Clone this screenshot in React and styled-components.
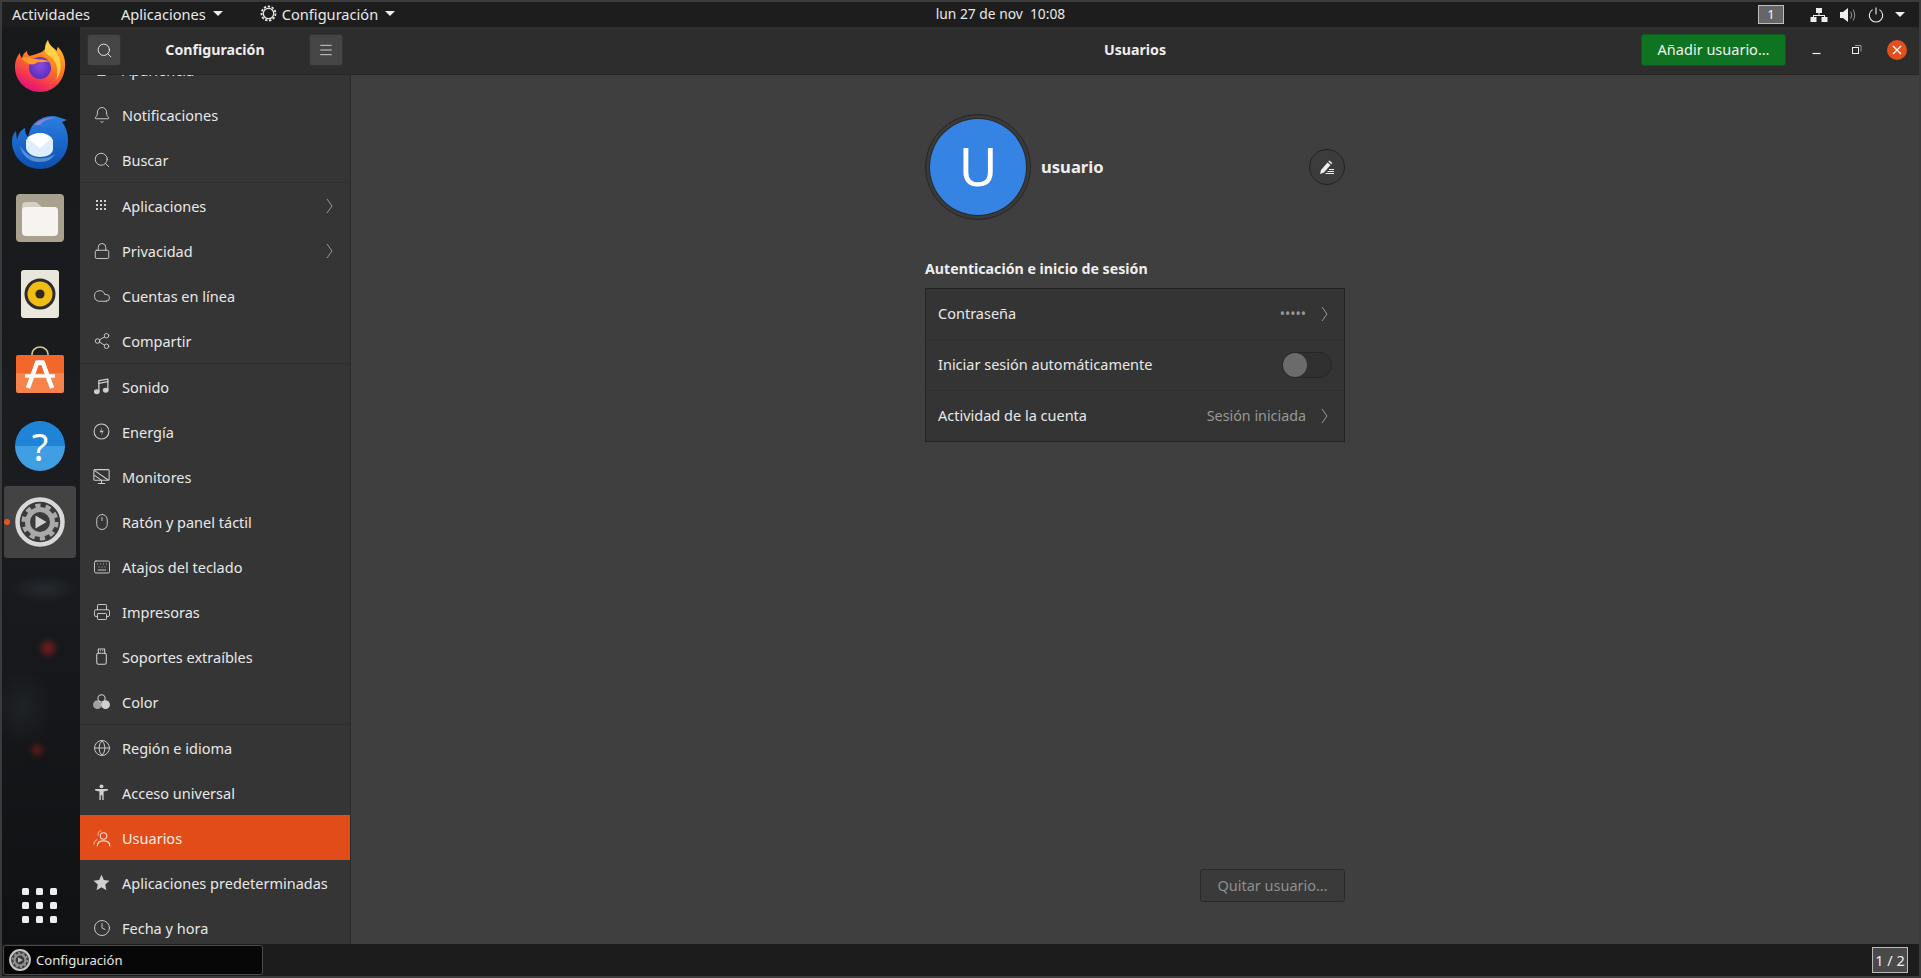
import React from 'react';
import styled, { createGlobalStyle } from 'styled-components';
import { Bell, Search, Lock, Cloud, Share2, Mouse, Keyboard, Printer, Globe, Clock, Menu } from 'lucide-react';

const GlobalStyle = createGlobalStyle`
  html, body {
    margin: 0;
    height: 100%;
    overflow: hidden;
    background: #3b3b3b;
    font-family: "Noto Sans", "Open Sans", sans-serif;
  }
  * { box-sizing: border-box; }
`;

const Glyph = ({ children, size = 17, vb = 16 }) => (
  <svg width={size} height={size} viewBox={`0 0 ${vb} ${vb}`} fill="none" stroke="currentColor" strokeWidth="1" strokeLinecap="round" strokeLinejoin="round">
    {children}
  </svg>
);

const lucide = (Comp) => () => <Comp size={18} strokeWidth={1.25} />;

const GripIcon = () => (
  <svg width="17" height="17" viewBox="0 0 17 17" fill="currentColor">
    {[3, 7, 11].flatMap((y) => [3, 7, 11].map((x) => <rect key={`${x}-${y}`} x={x} y={y} width="2" height="2" />))}
  </svg>
);
const MusicIcon = () => (
  <Glyph>
    <path d="M5.500 12.800V2.500L14 1v10" strokeWidth="1.200" />
    <path d="M5.500 5 14 3.500" strokeWidth="1.200" />
    <ellipse cx="3.600" cy="13" rx="2.200" ry="1.800" fill="currentColor" />
    <ellipse cx="12" cy="11.500" rx="2.200" ry="1.800" fill="currentColor" />
  </Glyph>
);
const EnergyIcon = () => (
  <Glyph>
    <circle cx="8" cy="8" r="7" />
    <path d="M8.800 3.500 6.300 8.600h2.400L7.400 12.500l2.600-5.300H7.700z" fill="currentColor" stroke="none" />
  </Glyph>
);
const MonitorIcon = () => (
  <Glyph>
    <rect x="0.800" y="1.500" width="14.400" height="10" rx="1" />
    <path d="M1.500 2.500 14 11M1.500 7l6 4.200M5 14.500h6M8 11.500v3" />
  </Glyph>
);
const UsbIcon = () => (
  <Glyph>
    <rect x="3.500" y="5" width="9" height="10.300" rx="1.600" />
    <path d="M5 5V1h6v4M7 2.600h.1M9 2.600h.1" />
  </Glyph>
);
const ColorIcon = () => (
  <Glyph>
    <circle cx="8" cy="5" r="3.400" />
    <circle cx="4.200" cy="11" r="3.600" fill="currentColor" opacity=".7" />
    <circle cx="11.800" cy="11" r="3.600" fill="currentColor" />
  </Glyph>
);
const AccessIcon = () => (
  <svg width="17" height="17" viewBox="0 0 16 16" fill="currentColor">
    <circle cx="8" cy="2.200" r="1.800" />
    <path d="M2 4.800h12v1.400l-4 .8V15H8.700v-4.500H7.300V15H6V7L2 6.200z" />
  </svg>
);
const UsersIcon = () => (
  <Glyph size={18}>
    <circle cx="9.400" cy="6.200" r="2.900" stroke="#f5d9cf" />
    <path d="M3.800 15c.2-3 2.600-4.400 5.600-4.400s5.400 1.400 5.600 4.400" stroke="#f5d9cf" />
    <path d="M7.200 1.600a3 3 0 0 0-2.600 4M3.600 9.500C2 10.200 1 11.400.8 13.400" stroke="#f0a689" />
  </Glyph>
);
const StarIcon = () => (
  <svg width="17" height="17" viewBox="0 0 16 16" fill="currentColor">
    <path d="M8 .8l2.200 4.900 5.300.6-4 3.600 1.100 5.300L8 12.500l-4.600 2.700 1.100-5.300-4-3.600 5.300-.6z" />
  </svg>
);
const AppearanceIcon = () => (
  <Glyph>
    <rect x="0.800" y="1" width="14.400" height="9" rx="1" fill="currentColor" />
    <path d="M8 10v3M4.500 13.500h7" />
  </Glyph>
);

const Chevron = styled.svg.attrs({ viewBox: '0 0 7 16', children: <path d="M1 1l5 7-5 7" fill="none" stroke="currentColor" strokeWidth="1" /> })`
  width: 7px;
  height: 16px;
  color: #9a9a9a;
  flex: none;
`;

const PanelGear = () => (
  <svg width="17" height="17" viewBox="0 0 17 17" fill="none" stroke="#e6e6e6">
    <circle cx="8.500" cy="8.500" r="5.200" strokeWidth="1.300" />
    <circle cx="8.500" cy="8.500" r="7" strokeWidth="1.800" strokeDasharray="2.400 1.600" />
  </svg>
);

const GearIcon = ({ size = 50, ring = '#d8d8d8', gear = '#a9a9a9', play = '#cfcfcf' }) => (
  <svg width={size} height={size} viewBox="0 0 50 50">
    <circle cx="25" cy="25" r="22.500" fill="#3a3a3a" stroke={ring} strokeWidth="4.500" />
    <circle cx="25" cy="25" r="12.500" fill="none" stroke={gear} strokeWidth="5" />
    <circle cx="25" cy="25" r="16.500" fill="none" stroke={gear} strokeWidth="4" strokeDasharray="5.200 5.170" />
    <path d="M20.500 18.500 31.500 25l-11 6.500z" fill={play} />
  </svg>
);

const FirefoxLogo = () => (
  <svg width="52" height="54" viewBox="0 0 52 54">
    <defs>
      <linearGradient id="ffBody" x1="0.800" y1="0" x2="0.300" y2="1">
        <stop offset="0" stopColor="#ffc02e" />
        <stop offset="0.450" stopColor="#ff7a1f" />
        <stop offset="0.850" stopColor="#f0255f" />
        <stop offset="1" stopColor="#d8127f" />
      </linearGradient>
      <radialGradient id="ffCore" cx="0.500" cy="0.400" r="0.600">
        <stop offset="0" stopColor="#8a4be0" />
        <stop offset="1" stopColor="#5b2bb8" />
      </radialGradient>
    </defs>
    <path d="M34 1c0 5 5 7 9 11 0-2 0-3 1-4 4 4 8 11 7 20-1 14-11 25-25 25C12 53 1 42 1 28c0-6 2-11 5-14 0 3 1 4 2 5 1-4 3-6 5-7 0 3 1 4 3 5 5-2 13-3 15-7 1-3 2-6 3-9z" fill="url(#ffBody)" />
    <path d="M34 1c1 6 8 10 11 17 3 8 2 17-3 23 3-8 1-18-5-23-4-3-7-4-6-9 0-3 1-6 3-8z" fill="#ffd74a" opacity=".9" />
    <circle cx="26" cy="29" r="11" fill="url(#ffCore)" />
    <path d="M8 19c5-2 9 0 13 1 6 1 11 0 15 3-5-1-8 1-12 0-3 3-8 3-11 1-2-1-4-3-5-5z" fill="#ff9a2a" />
  </svg>
);

const ThunderbirdLogo = () => (
  <svg width="56" height="54" viewBox="0 0 56 54">
    <defs>
      <linearGradient id="tbBody" x1="0.500" y1="0" x2="0.500" y2="1">
        <stop offset="0" stopColor="#2a7fe0" />
        <stop offset="1" stopColor="#0c4fb0" />
      </linearGradient>
    </defs>
    <path d="M20 11C26 3 38-1 46 2l9 3-5 2c4 5 6 12 6 19 0 15-12 28-28 28C13 54 0 42 0 27c0-6 2-9 4-11l1 9c1-6 4-10 8-12 0 4 1 7 3 9 1-4 2-8 4-11z" fill="url(#tbBody)" />
    <path d="M22 10C28 4 37 1 45 3c-7 0-13 2-17 7z" fill="#8d7fd8" />
    <path d="M14 25c3-3 9-7 14-7s10 3 13 7v9c0 5-6 8-13 8s-14-4-14-10z" fill="#dfeefb" />
    <path d="M15 23c3-3 8-5 13-5s9 2 12 5L28 33z" fill="#fff" />
    <path d="M8 31c2 10 10 16 19 16s13-3 16-8c-6 4-12 5-18 4-7-1-12-5-17-12z" fill="#8bbdf0" opacity=".55" />
  </svg>
);

const FilesLogo = () => (
  <svg width="50" height="50" viewBox="0 0 50 50">
    <rect x="1" y="1" width="48" height="48" rx="4" fill="#a9a18f" />
    <path d="M7 13a4 4 0 0 1 4-4h10l6 5h12a4 4 0 0 1 4 4v6H7z" fill="#d4cfc4" />
    <rect x="7" y="14" width="36" height="29" rx="4" fill="#f6f4f1" />
  </svg>
);

const RhythmboxLogo = () => (
  <svg width="40" height="50" viewBox="0 0 40 50">
    <rect x="1" y="1" width="38" height="48" rx="3" fill="#e9e6db" />
    <circle cx="20" cy="25" r="15.500" fill="#2c2c2c" />
    <circle cx="20" cy="25" r="12.500" fill="#efbd13" />
    <circle cx="20" cy="25" r="4.600" fill="#2e2a20" />
  </svg>
);

const StoreLogo = () => (
  <svg width="50" height="48" viewBox="0 0 50 48">
    <path d="M17 11V8a8 7 0 0 1 16 0v3" fill="none" stroke="#d9c79a" strokeWidth="1.600" />
    <path d="M3 9h44a2 2 0 0 1 2 2v16H1V11a2 2 0 0 1 2-2z" fill="#f4672a" />
    <path d="M1 27h48v18a2 2 0 0 1-2 2H3a2 2 0 0 1-2-2z" fill="#f7824a" />
    <path d="M13 42 22 17h6l9 25" fill="none" stroke="#fff" strokeWidth="4.500" />
    <path d="M21 16h8M10 30h30" fill="none" stroke="#fff" strokeWidth="3.500" />
  </svg>
);

const groups = [
  [
    { label: 'Apariencia', Icon: AppearanceIcon },
    { label: 'Notificaciones', Icon: lucide(Bell) },
    { label: 'Buscar', Icon: lucide(Search) },
  ],
  [
    { label: 'Aplicaciones', Icon: GripIcon, more: true },
    { label: 'Privacidad', Icon: lucide(Lock), more: true },
    { label: 'Cuentas en línea', Icon: lucide(Cloud) },
    { label: 'Compartir', Icon: lucide(Share2) },
  ],
  [
    { label: 'Sonido', Icon: MusicIcon },
    { label: 'Energía', Icon: EnergyIcon },
    { label: 'Monitores', Icon: MonitorIcon },
    { label: 'Ratón y panel táctil', Icon: lucide(Mouse) },
    { label: 'Atajos del teclado', Icon: lucide(Keyboard) },
    { label: 'Impresoras', Icon: lucide(Printer) },
    { label: 'Soportes extraíbles', Icon: UsbIcon },
    { label: 'Color', Icon: ColorIcon },
  ],
  [
    { label: 'Región e idioma', Icon: lucide(Globe) },
    { label: 'Acceso universal', Icon: AccessIcon },
    { label: 'Usuarios', Icon: UsersIcon, active: true },
    { label: 'Aplicaciones predeterminadas', Icon: StarIcon },
    { label: 'Fecha y hora', Icon: lucide(Clock) },
  ],
];

export default function App() {
  return (
    <>
      <GlobalStyle />
      <Screen>
        <TopBar>
          <TopLeft>
            <TopItem>Actividades</TopItem>
            <TopItem>Aplicaciones<Caret /></TopItem>
            <TopItem $wide><PanelGear />Configuración<Caret /></TopItem>
          </TopLeft>
          <PanelClock>lun 27 de nov&nbsp;&nbsp;10:08</PanelClock>
          <TopRight>
            <WorkspaceBox>1</WorkspaceBox>
            <svg width="18" height="16" viewBox="0 0 18 16" fill="#eee">
              <rect x="6" y="1" width="6" height="5" />
              <rect x="0.500" y="10" width="6" height="5" />
              <rect x="11.500" y="10" width="6" height="5" />
              <path d="M8.500 6h1v2H15v2h-1V9H4v1H3V8h5.500z" />
            </svg>
            <svg width="18" height="16" viewBox="0 0 18 16" fill="#eee">
              <path d="M1 5h3l5-4v14l-5-4H1z" />
              <path d="M11.500 4.500c1.300 2 1.300 5 0 7M14 2.500c2.200 3 2.200 8 0 11" fill="none" stroke="#8a8a8a" strokeWidth="1.100" />
            </svg>
            <svg width="16" height="16" viewBox="0 0 16 16" fill="none" stroke="#eee" strokeWidth="1.100">
              <path d="M4.600 2.600a6.700 6.700 0 1 0 6.800 0M8 .5v7" />
            </svg>
            <EndCaret />
          </TopRight>
        </TopBar>

        <Middle>
          <Dock>
            <Glow $x={46} $y={621} $r={7} />
            <Glow $x={35} $y={723} $r={5} />
            <DockItem><FirefoxLogo /></DockItem>
            <DockItem><ThunderbirdLogo /></DockItem>
            <DockItem><FilesLogo /></DockItem>
            <DockItem><RhythmboxLogo /></DockItem>
            <DockItem><StoreLogo /></DockItem>
            <DockItem><HelpBall>?</HelpBall></DockItem>
            <DockItem $active><RunDot /><GearIcon /></DockItem>
            <AppGrid>{Array.from({ length: 9 }, (_, i) => <i key={i} />)}</AppGrid>
          </Dock>

          <SidePane>
            <SideHead>
              <HeadButton><Search size={17} strokeWidth={1.3} /></HeadButton>
              <HeadTitle>Configuración</HeadTitle>
              <HeadButton><Menu size={16} strokeWidth={1.2} /></HeadButton>
            </SideHead>
            <SideList>
              {groups.map((group, g) => (
                <SideGroup key={g}>
                  {group.map(({ label, Icon, more, active }) => (
                    <SideRow key={label} $active={active}>
                      <SideIcon><Icon /></SideIcon>
                      <span>{label}</span>
                      {more && <Chevron />}
                    </SideRow>
                  ))}
                </SideGroup>
              ))}
            </SideList>
          </SidePane>

          <MainPane>
            <MainHead>
              <MainTitle>Usuarios</MainTitle>
              <AddButton>Añadir usuario…</AddButton>
              <WinButtons>
                <WinButton>
                  <svg width="12" height="12" viewBox="0 0 12 12"><path d="M1.500 9.500h8" stroke="#eee" strokeWidth="1.200" /></svg>
                </WinButton>
                <WinButton>
                  <svg width="12" height="12" viewBox="0 0 12 12" fill="none" stroke="#eee">
                    <rect x="1.500" y="3.500" width="6" height="6" />
                    <path d="M4 1.500h6v6" stroke="#999" />
                  </svg>
                </WinButton>
                <CloseButton>
                  <svg width="10" height="10" viewBox="0 0 10 10"><path d="M1 1l8 8M9 1l-8 8" stroke="#fff" strokeWidth="1.300" /></svg>
                </CloseButton>
              </WinButtons>
            </MainHead>

            <Content>
              <Column>
                <Profile>
                  <AvatarRing><Avatar>U</Avatar></AvatarRing>
                  <UserName>usuario</UserName>
                  <EditButton>
                    <svg width="16" height="16" viewBox="0 0 16 16" fill="#eee">
                      <path d="M1 15l1-4 6.500-7.500 3 2.600L5 13.500z" />
                      <path d="M9.300 2.600l1-1.100 3 2.600-1 1.100zM10 10h5v1h-5zM8.500 12h6.500v1H8.500zM6.500 14H15v1H6.500z" />
                    </svg>
                  </EditButton>
                </Profile>

                <SectionTitle>Autenticación e inicio de sesión</SectionTitle>
                <SettingsList>
                  <SettingRow>
                    <span>Contraseña</span>
                    <Value $dots>•••••</Value>
                    <Chevron />
                  </SettingRow>
                  <SettingRow>
                    <span>Iniciar sesión automáticamente</span>
                    <Toggle><Knob /></Toggle>
                  </SettingRow>
                  <SettingRow>
                    <span>Actividad de la cuenta</span>
                    <Value>Sesión iniciada</Value>
                    <Chevron />
                  </SettingRow>
                </SettingsList>

                <Footer>
                  <RemoveButton>Quitar usuario…</RemoveButton>
                </Footer>
              </Column>
            </Content>
          </MainPane>
        </Middle>

        <TaskBar>
          <TaskButton><GearIcon size={22} ring="#c8c8c8" gear="#8f8f8f" play="#b5b5b5" />Configuración</TaskButton>
          <Pager>1 / 2</Pager>
        </TaskBar>
      </Screen>
    </>
  );
}

const Screen = styled.div`
  width: 1921px;
  height: 978px;
  padding: 2px;
  display: flex;
  flex-direction: column;
  background: #3b3b3b;
  overflow: hidden;
`;

const TopBar = styled.header`
  height: 25px;
  flex: none;
  position: relative;
  display: flex;
  align-items: center;
  justify-content: space-between;
  padding: 0 0 0 10px;
  background: #1d1d1d;
  color: #e8e8e8;
  font-size: 14.6px;
`;

const TopLeft = styled.div`
  display: flex;
  align-items: center;
  gap: 31px;
  padding-bottom: 2px;
`;

const TopItem = styled.div`
  display: flex;
  align-items: center;
  gap: 5px;
  margin-left: ${(p) => (p.$wide ? '6px' : '0')};
`;

const Caret = styled.span`
  display: inline-block;
  width: 0;
  height: 0;
  margin-left: 2px;
  border-left: 5px solid transparent;
  border-right: 5px solid transparent;
  border-top: 5px solid #eee;
`;

const EndCaret = styled(Caret)`
  margin-left: 0;
`;

const PanelClock = styled.div`
  position: absolute;
  left: 0;
  right: 0;
  padding-bottom: 2px;
  font-size: 13.8px;
  text-align: center;
  transform: translateX(40px);
`;

const TopRight = styled.div`
  display: flex;
  align-items: center;
  gap: 11px;
  padding-right: 14px;
`;

const WorkspaceBox = styled.div`
  width: 26px;
  height: 19px;
  margin-right: 15px;
  border: 1px solid #bdbdbd;
  background: #666;
  color: #f4f4f4;
  font-size: 13px;
  line-height: 17px;
  text-align: center;
`;

const Middle = styled.div`
  flex: 1;
  min-height: 0;
  display: flex;
`;

const Dock = styled.nav`
  width: 78px;
  flex: none;
  position: relative;
  display: flex;
  flex-direction: column;
  gap: 4px;
  padding: 3px 4px 0 2px;
  background:
    radial-gradient(ellipse 34px 14px at 42px 562px, #262b31 0%, rgba(38, 43, 49, 0) 100%),
    radial-gradient(ellipse 30px 40px at 20px 680px, #1f2226 0%, rgba(31, 34, 38, 0) 100%),
    linear-gradient(180deg, #18191b 0%, #1a1c1f 50%, #15171a 75%, #101113 100%);
  overflow: hidden;
`;

const Glow = styled.span`
  position: absolute;
  left: ${(p) => p.$x - p.$r}px;
  top: ${(p) => p.$y - p.$r}px;
  width: ${(p) => p.$r * 2}px;
  height: ${(p) => p.$r * 2}px;
  border-radius: 50%;
  background: #6e1c1c;
  filter: blur(3px);
`;

const DockItem = styled.div`
  position: relative;
  height: 72px;
  flex: none;
  display: flex;
  align-items: center;
  justify-content: center;
  border-radius: 3px;
  background: ${(p) => (p.$active ? '#434343' : 'transparent')};
`;

const RunDot = styled.span`
  position: absolute;
  left: 0;
  top: 33px;
  width: 6px;
  height: 6px;
  border-radius: 50%;
  background: #e9541f;
`;

const HelpBall = styled.div`
  width: 50px;
  height: 50px;
  border-radius: 50%;
  background: linear-gradient(180deg, #1f83d8 0 50%, #3f9fe2 50% 100%);
  color: #fff;
  font-size: 38px;
  line-height: 50px;
  text-align: center;
`;

const AppGrid = styled.div`
  position: absolute;
  left: 20px;
  top: 861px;
  display: grid;
  grid-template-columns: repeat(3, 7px);
  gap: 7px;
  & > i {
    height: 7px;
    border-radius: 1.5px;
    background: #eee;
  }
`;

const SidePane = styled.aside`
  width: 271px;
  flex: none;
  display: flex;
  flex-direction: column;
  background: #353535;
  border-right: 1px solid #2b2b2b;
`;

const SideHead = styled.div`
  height: 47px;
  flex: none;
  position: relative;
  z-index: 1;
  display: flex;
  align-items: center;
  justify-content: space-between;
  padding: 0 7px 1px;
  background: #2d2d2d;
  box-shadow: 0 1px 0 #262626;
`;

const HeadButton = styled.button`
  width: 34px;
  height: 32px;
  display: flex;
  align-items: center;
  justify-content: center;
  padding: 0;
  border: 1px solid #333;
  border-radius: 3px;
  background: #454545;
  color: #eee;
`;

const HeadTitle = styled.div`
  padding-bottom: 2px;
  font-size: 14.2px;
  font-weight: 700;
  color: #eee;
`;

const SideList = styled.div`
  flex: 1;
  min-height: 0;
  overflow: hidden;
  margin-top: -27px;
`;

const SideGroup = styled.div`
  border-bottom: 1px solid #2f2f2f;
`;

const SideRow = styled.div`
  height: 45px;
  display: flex;
  align-items: center;
  padding: 0 17px 0 13px;
  font-size: 14.5px;
  color: ${(p) => (p.$active ? '#f8ece7' : '#e8e8e8')};
  background: ${(p) => (p.$active ? '#e24c18' : 'transparent')};
  & > span { flex: 1; }
`;

const SideIcon = styled.div`
  width: 29px;
  flex: none;
  display: flex;
  align-items: center;
  color: #cfcfcf;
`;

const MainPane = styled.main`
  flex: 1;
  min-width: 0;
  display: flex;
  flex-direction: column;
  background: #3f3f3f;
`;

const MainHead = styled.div`
  height: 47px;
  flex: none;
  position: relative;
  display: flex;
  align-items: center;
  justify-content: flex-end;
  padding: 0 12px 1px 0;
  background: #2d2d2d;
  box-shadow: 0 1px 0 #262626;
`;

const MainTitle = styled.div`
  position: absolute;
  left: 0;
  right: 0;
  padding-bottom: 2px;
  text-align: center;
  font-size: 14.2px;
  font-weight: 700;
  color: #eee;
  pointer-events: none;
`;

const AddButton = styled.button`
  position: relative;
  width: 145px;
  height: 32px;
  padding: 0 0 3px;
  border: 1px solid #0b5c1a;
  border-radius: 3px;
  background: #0e7421;
  color: #eef5ef;
  font-family: inherit;
  font-size: 14.5px;
`;

const WinButtons = styled.div`
  position: relative;
  display: flex;
  align-items: center;
  margin-left: 21px;
  gap: 20px;
`;

const WinButton = styled.div`
  width: 20px;
  height: 20px;
  display: flex;
  align-items: center;
  justify-content: center;
`;

const CloseButton = styled(WinButton)`
  border-radius: 50%;
  background: #e2501d;
`;

const Content = styled.div`
  flex: 1;
  min-height: 0;
  display: flex;
  justify-content: center;
`;

const Column = styled.div`
  width: 420px;
  display: flex;
  flex-direction: column;
  padding: 40px 0 42px;
`;

const Profile = styled.div`
  display: flex;
  align-items: center;
`;

const AvatarRing = styled.div`
  width: 106px;
  height: 106px;
  flex: none;
  padding: 4px;
  border: 1px solid #262626;
  border-radius: 50%;
  background: #3a3a3a;
`;

const Avatar = styled.div`
  width: 100%;
  height: 100%;
  border-radius: 50%;
  background: #3584e4;
  box-shadow: 0 0 0 1px #2a2a2a;
  color: #fff;
  font-size: 53px;
  font-weight: 400;
  line-height: 94px;
  text-align: center;
`;

const UserName = styled.div`
  flex: 1;
  margin-left: 10px;
  padding-bottom: 2px;
  font-size: 16.6px;
  font-weight: 700;
  color: #eee;
`;

const EditButton = styled.div`
  width: 36px;
  height: 36px;
  display: flex;
  align-items: center;
  justify-content: center;
  border: 1px solid #222;
  border-radius: 50%;
  background: #3c3c3c;
`;

const SectionTitle = styled.div`
  margin-top: 39px;
  font-size: 14.2px;
  font-weight: 700;
  color: #eee;
`;

const SettingsList = styled.div`
  height: 154px;
  margin-top: 10px;
  display: flex;
  flex-direction: column;
  border: 1px solid #232323;
  background: #343434;
`;

const SettingRow = styled.div`
  flex: 1;
  display: flex;
  align-items: center;
  padding: 0 16px 0 12px;
  font-size: 14.5px;
  color: #e8e8e8;
  & + & { border-top: 1px solid #2f2f2f; }
  & > span { padding-bottom: 2px; }
  & > span:first-child { flex: 1; }
`;

const Value = styled.span`
  margin-right: 15px;
  color: #989898;
  font-size: ${(p) => (p.$dots ? '14px' : '14.3px')};
`;

const Toggle = styled.div`
  width: 50px;
  height: 26px;
  margin-right: -4px;
  border: 1px solid #262626;
  border-radius: 13px;
  background: #303030;
`;

const Knob = styled.div`
  width: 24px;
  height: 24px;
  border-radius: 50%;
  background: #6b6b6b;
`;

const Footer = styled.div`
  margin-top: auto;
  display: flex;
  justify-content: flex-end;
`;

const RemoveButton = styled.button`
  width: 145px;
  height: 33px;
  padding: 0 0 2px;
  border: 1px solid #2a2a2a;
  border-radius: 3px;
  background: #3a3a3a;
  color: #8f8f8f;
  font-family: inherit;
  font-size: 14.5px;
`;

const TaskBar = styled.footer`
  height: 32px;
  flex: none;
  display: flex;
  align-items: center;
  justify-content: space-between;
  padding: 0 11px 0 1px;
  background: #1c1c1c;
`;

const TaskButton = styled.div`
  width: 260px;
  height: 30px;
  display: flex;
  align-items: center;
  gap: 5px;
  padding-left: 5px;
  border: 1px solid #4a4a4a;
  border-radius: 3px;
  background: #060606;
  color: #e6e6e6;
  font-size: 13.1px;
`;

const Pager = styled.div`
  width: 36px;
  height: 26px;
  border: 1px solid #bbb;
  background: #4a4a4a;
  color: #eee;
  font-size: 14.5px;
  line-height: 24px;
  text-align: center;
`;
